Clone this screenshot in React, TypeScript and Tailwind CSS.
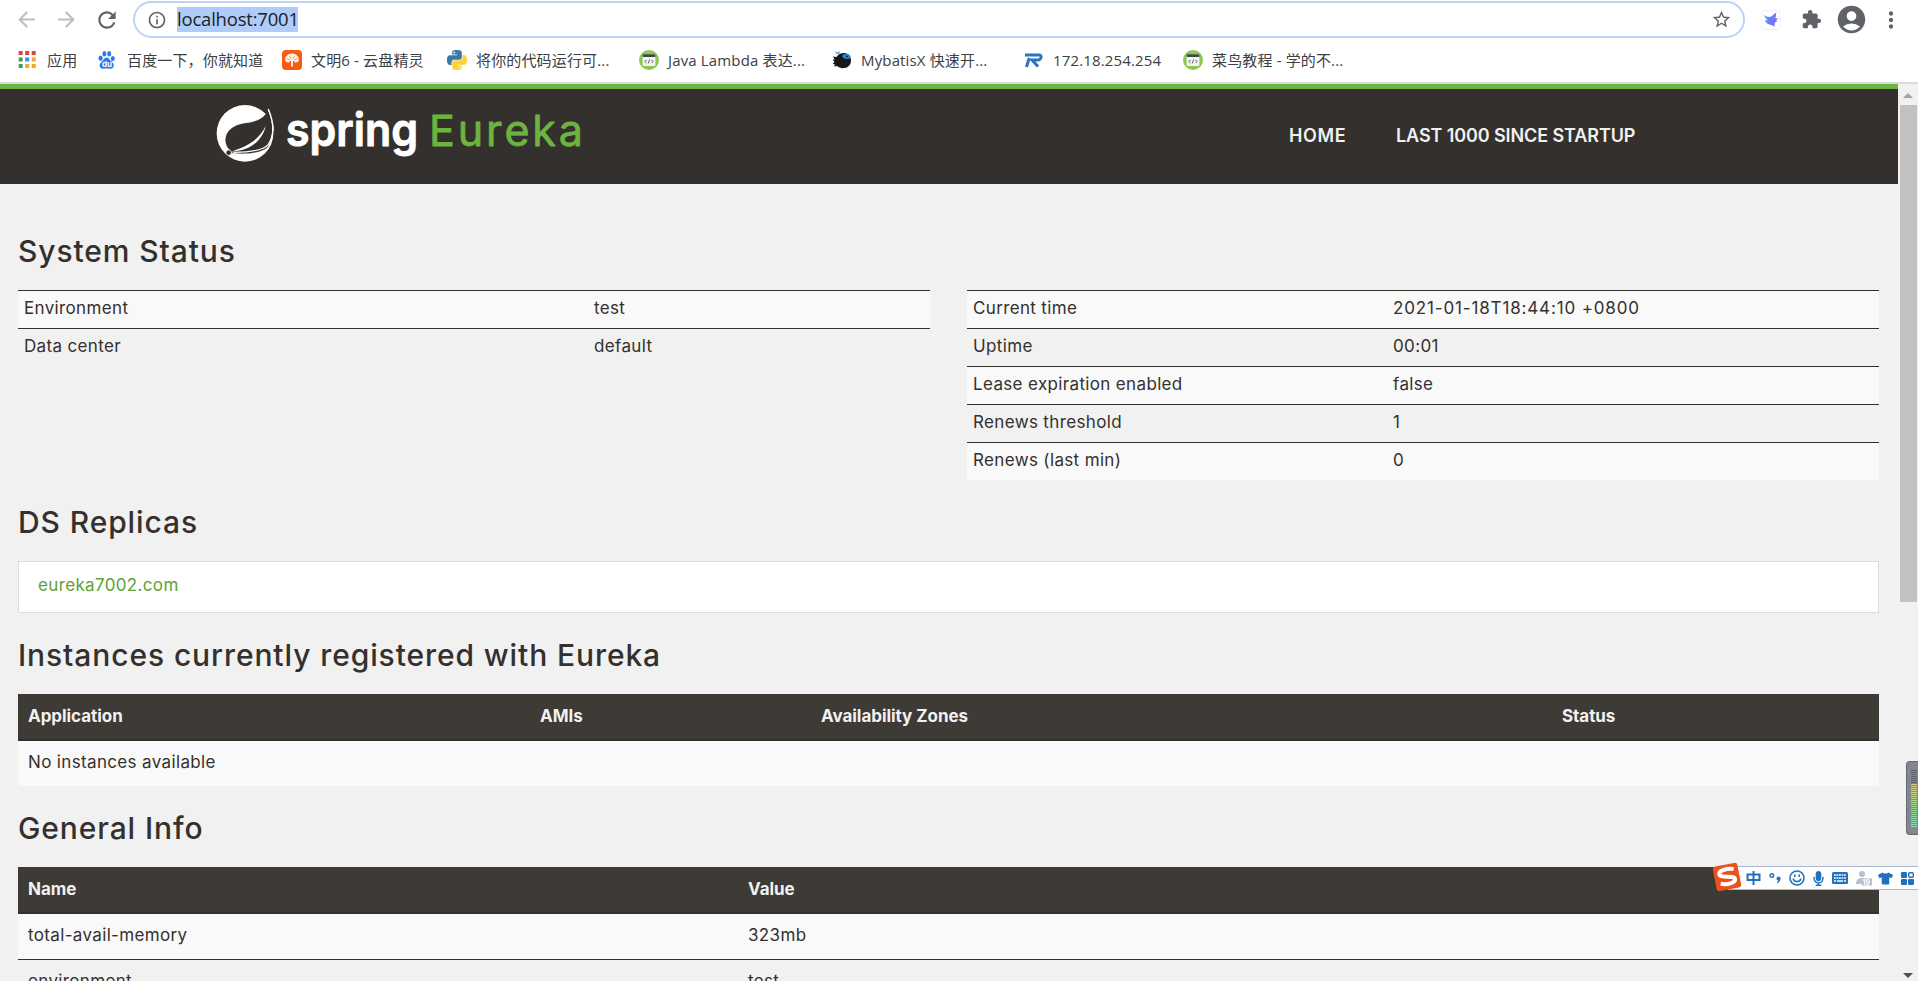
import React from 'react'
import {
  MdAccountCircle,
  MdArrowBack,
  MdArrowForward,
  MdExtension,
  MdMoreVert,
  MdOutlineInfo,
  MdRefresh,
  MdStarOutline,
} from 'react-icons/md'
import {FaMicrophone, FaTshirt} from 'react-icons/fa'

const PYTHON_PATH =
  'M14.25.18l.9.2.73.26.59.3.45.32.34.34.25.34.16.33.1.3.04.26.02.2-.01.13V8.5l-.05.63-.13.55-.21.46-.26.38-.3.31-.33.25-.35.19-.35.14-.33.1-.3.07-.26.04-.21.02H8.77l-.69.05-.59.14-.5.22-.41.27-.33.32-.27.35-.2.36-.15.37-.1.35-.07.32-.04.27-.02.21v3.06H3.17l-.21-.03-.28-.07-.32-.12-.35-.18-.36-.26-.36-.36-.35-.46-.32-.59-.28-.73-.21-.88-.14-1.05-.05-1.23.06-1.22.16-1.04.24-.87.32-.71.36-.57.4-.44.42-.33.42-.24.4-.16.36-.1.32-.05.24-.01h.16l.06.01h8.16v-.83H6.18l-.01-2.75-.02-.37.05-.34.11-.31.17-.28.25-.26.31-.23.38-.2.44-.18.51-.15.58-.12.64-.1.71-.06.77-.04.84-.02 1.27.05zm-6.3 1.98l-.23.33-.08.41.08.41.23.34.33.22.41.09.41-.09.33-.22.23-.34.08-.41-.08-.41-.23-.33-.33-.22-.41-.09-.41.09z'

const AppsIcon = () => (
  <svg viewBox="0 0 20 20" className="size-5">
    {['#db4437', '#db4437', '#db4437', '#3a9d5d', '#4285f4', '#f0a92b', '#3a9d5d', '#f0a92b', '#f0a92b'].map(
      (color, i) => (
        <rect key={i} x={0.7 + (i % 3) * 6.5} y={1 + Math.floor(i / 3) * 6.5} width="4" height="4" fill={color} />
      ),
    )}
  </svg>
)

const BaiduIcon = () => (
  <svg viewBox="0 0 20 20" className="size-5" fill="#2f78e8">
    <ellipse cx="2.600" cy="8.200" rx="2.100" ry="2.600" />
    <ellipse cx="6.400" cy="3.800" rx="2" ry="2.700" />
    <ellipse cx="11.200" cy="3.800" rx="2" ry="2.700" />
    <ellipse cx="14.800" cy="8.400" rx="2" ry="2.500" />
    <path d="M8.700 7.600c1.800 0 2.700 1.600 3.800 3 1.300 1.500 3.500 2.700 3.300 5.200-.2 2.300-1.800 3.200-3.700 3-1.300-.1-2.100-.3-3.400-.3s-2.100.2-3.400.3c-1.900.2-3.500-.7-3.700-3-.2-2.500 2-3.700 3.300-5.200 1.100-1.400 2-3 3.800-3z" />
    <text x="3.900" y="17.200" fill="#fff" className="font-['Inter'] text-[8px] font-bold">
      du
    </text>
  </svg>
)

const CloudDiskIcon = () => (
  <svg viewBox="0 0 20 20" className="size-5">
    <rect width="20" height="20" rx="4" fill="#f95c0f" />
    <path
      d="M9 16.500V11H7.500v1.500C4.500 12.800 3 11.500 3.200 9.500 3.400 6 6.500 3.600 10 3.600S16.600 6 16.800 9.500c.2 2-1.300 3.300-4.300 3V11H11v5.500z"
      fill="#fff"
      opacity=".92"
    />
    <path d="M5 9l3 1M15 9l-3 1M7.500 6l1.500 3M12.500 6L11 9" stroke="#f95c0f" strokeWidth=".6" />
  </svg>
)

const PythonIcon = () => (
  <svg viewBox="0 0 24 24" className="size-5">
    <path d={PYTHON_PATH} fill="#3b77a8" />
    <path d={PYTHON_PATH} fill="#fbd43b" transform="rotate(180 12 12)" />
  </svg>
)

const RunoobIcon = () => (
  <svg viewBox="0 0 20 20" className="size-5">
    <circle cx="10" cy="10" r="10" fill="#8cc751" />
    <rect x="3.600" y="4.500" width="12.800" height="11.500" rx="1" fill="#f4f6f1" />
    <path d="M3.600 7V5.200q0-1 1-1h10.800q1 0 1 1V7z" fill="#3c4a42" />
    <path
      d="M7.500 9.800L5.800 11.500l1.700 1.700M12.500 9.800l1.700 1.700-1.700 1.700M10.700 9.500l-1.400 4"
      stroke="#55605a"
      fill="none"
    />
  </svg>
)

const MybatisIcon = () => (
  <svg viewBox="0 0 20 20" className="size-5">
    <path
      d="M1 6.500l3.500.6C6 4.500 9 3 12 3c4 0 7 3 7 7.500 0 4-2.500 7-6.500 7.500-3 .5-6-.5-7.500-2l-3 .5 1.200-2L.8 14l1.700-2.500L.5 10l2-.8z"
      fill="#17171a"
    />
    <path d="M10 6c2-3 6-3 8.500 0 .3 2-1 3-3 3-2.500.2-4.500-.7-5.500-3z" fill="#2b82d9" />
    <path d="M3 1l2.500 1.800L7 .8l1 2.700-3.500 1z" fill="#5ba7ea" />
    <circle cx="15" cy="6.500" r="1" fill="#0f2338" />
  </svg>
)

const RuijieIcon = () => (
  <svg viewBox="0 0 20 20" className="size-5" fill="none" stroke="#2a74bd" strokeWidth="3">
    <path d="M1 5h14q2.500 0 2 2.500-.6 2.500-3.300 2.500H8l6 6.500" />
    <path d="M5.200 8L2.500 17" />
  </svg>
)

const bookmarks = [
  {label: '应用', icon: <AppsIcon />, width: 'w-[80px]'},
  {label: '百度一下，你就知道', icon: <BaiduIcon />, width: 'w-[184px]'},
  {label: '文明6 - 云盘精灵', icon: <CloudDiskIcon />, width: 'w-[165px]'},
  {label: '将你的代码运行可...', icon: <PythonIcon />, width: 'w-[192px]'},
  {label: 'Java Lambda 表达...', icon: <RunoobIcon />, width: 'w-[193px]'},
  {label: 'MybatisX 快速开...', icon: <MybatisIcon />, width: 'w-[192px]'},
  {label: '172.18.254.254', icon: <RuijieIcon />, width: 'w-[159px]'},
  {label: '菜鸟教程 - 学的不...', icon: <RunoobIcon />, width: 'w-[180px]'},
]

const BrowserChrome = () => (
  <div className="h-[84px] border-b-2 border-[#dadcdc] bg-white font-['Open_Sans','Noto_Sans_CJK_SC',sans-serif]">
    <div className="flex h-[39px] items-center pl-[14px]">
      <MdArrowBack size={25} className="mr-[15px] text-[#bcbec1]" />
      <MdArrowForward size={25} className="mr-[15px] text-[#bcbec1]" />
      <MdRefresh size={26} className="mr-[13px] text-[#5f6368]" />
      <div className="flex h-[37px] w-[1612px] items-center rounded-full border-2 border-[#b9d4f5] pr-[11px] pl-3">
        <MdOutlineInfo size={20} className="text-[#5f6368]" />
        <span className="ml-[10px] h-[25px] w-[121px] bg-[#aecbfa] text-[18.500px] leading-[24px] tracking-[-0.2px] whitespace-nowrap text-[#202124]">
          localhost:7001
        </span>
        <MdStarOutline size={21} className="ml-auto text-[#5f6368]" />
      </div>
      <svg viewBox="0 0 20 20" className="ml-4 size-5 rounded-sm border border-[#eeeffb]">
        <defs>
          <linearGradient id="bird" x1="0" y1="0" x2="1" y2="1">
            <stop offset="0" stopColor="#4aa3fb" />
            <stop offset="1" stopColor="#8a5cf0" />
          </linearGradient>
        </defs>
        <path
          d="M2 4.500c2.500 1.800 5 2.500 7.500 2C11.500 5.500 13.500 3.500 16 1.500c-.5 2.500-.5 4.500-1 6.500l3.500.5-3 1.800 1.500 1.700-2.500.5c-.5 1.500-.7 2.700-.5 5-2-1.500-3.500-1.800-5.500-2.500C5 14 3.500 12 3.500 10l3 .5C4.500 9 3 7 2 4.500z"
          fill="url(#bird)"
        />
      </svg>
      <MdExtension size={21} className="ml-5 text-[#5f6368]" />
      <MdAccountCircle size={33} className="ml-[13px] text-[#5f6368]" />
      <MdMoreVert size={26} className="ml-[10px] text-[#5f6368]" />
    </div>
    <div className="flex h-[42px] items-center pl-[18px]">
      {bookmarks.map(item => (
        <div key={item.label} className={`flex shrink-0 items-center gap-[9px] ${item.width}`}>
          {item.icon}
          <span className="text-[15px] leading-5 tracking-[0.15px] whitespace-nowrap text-[#3c4043]">{item.label}</span>
        </div>
      ))}
    </div>
  </div>
)

const SpringLogo = () => (
  <svg viewBox="0 0 370 70" className="h-[70px] w-[370px] overflow-visible">
    <g transform="translate(-17 -12) scale(0.3333)">
      <circle cx="135" cy="127" r="85" fill="#fff" />
      <path
        d="M205 54C195 84 170 92 135 97 95 103 75 125 77 150c1 15 8 22 14 28 2 4 5 7 9 8 50 4 85-2 103-18 17-30 20-70 2-114z"
        fill="#34302d"
        stroke="#34302d"
      />
      <path d="M205 54C222 95 225 130 205 160 190 180 150 184 100 184" fill="none" stroke="#fff" strokeWidth="4" />
      <path d="M197 105C188 148 150 180 92 182c53-17 86-37 105-77z" fill="#fff" />
      <path d="M205 50l14 55 14-30z" fill="#34302d" />
      <path d="M205 54c11 27 15 48 14 66" fill="none" stroke="#fff" strokeWidth="4" />
      <circle cx="86" cy="185" r="8" fill="#34302d" stroke="#fff" strokeWidth="2" />
    </g>
    <text
      x="69"
      y="43"
      textLength="132"
      lengthAdjust="spacingAndGlyphs"
      fill="#fff"
      stroke="#fff"
      strokeWidth="1"
      strokeLinejoin="round"
      className="font-['Inter'] text-[46px] font-semibold"
    >
      spring
    </text>
    <text
      x="212"
      y="43"
      textLength="154"
      fill="#6db33f"
      stroke="#6db33f"
      strokeWidth=".8"
      strokeLinejoin="round"
      className="font-['Inter'] text-[43px]"
    >
      Eureka
    </text>
  </svg>
)

const NavBar = () => (
  <nav className="flex h-[100px] border-t-[5px] border-[#6db33f] bg-[#34302d] pl-[217px] text-[#f1f1f1]">
    <div className="pt-[14px]">
      <SpringLogo />
    </div>
    <ul className="ml-[702px] flex gap-[49px] pt-[35px] font-['Inter'] text-[18px] leading-6 font-semibold tracking-[-0.1px] whitespace-nowrap">
      <li className="w-[58px] tracking-[0.6px]">HOME</li>
      <li>LAST 1000 SINCE STARTUP</li>
    </ul>
  </nav>
)

type StatusTableProps = {
  rows: Array<[string, string]>
  labelWidth: string
}

const StatusTable: React.FC<StatusTableProps> = ({rows, labelWidth}) => (
  <div className="w-[912px]">
    {rows.map(([label, value]) => (
      <div key={label} className="flex h-[38px] border-t border-[#34302d] pt-[5px] odd:bg-[#f9f9f9]">
        <div className={`pl-[6px] ${labelWidth}`}>{label}</div>
        <div className={value.length > 10 ? 'pl-[6px] tracking-[0.85px]' : 'pl-[6px]'}>{value}</div>
      </div>
    ))}
  </div>
)

const Heading: React.FC<{children: React.ReactNode}> = ({children}) => (
  <h1 className="mt-[26px] mb-[22px] text-[30px] leading-[33px] font-[450] tracking-[0.9px]">{children}</h1>
)

type Column = {
  title: string
  width: string
}

const TableHead: React.FC<{columns: Column[]}> = ({columns}) => (
  <div className="flex h-[47px] border-b-2 border-[#34302d] bg-[#3e3a35] pt-[10px] font-bold tracking-[-0.05px] text-[#f1f1f1]">
    {columns.map(column => (
      <div key={column.title} className={`pl-[10px] ${column.width}`}>
        {column.title}
      </div>
    ))}
  </div>
)

const instanceColumns: Column[] = [
  {title: 'Application', width: 'w-[512px]'},
  {title: 'AMIs', width: 'w-[281px]'},
  {title: 'Availability Zones', width: 'w-[741px]'},
  {title: 'Status', width: 'w-[327px]'},
]

const infoColumns: Column[] = [
  {title: 'Name', width: 'w-[720px]'},
  {title: 'Value', width: 'w-[1141px]'},
]

const Scrollbar = () => (
  <div className="flex w-5 flex-col items-center bg-[#f1f1f1]">
    <svg viewBox="0 0 10 5" className="mt-[9px] h-[5px] w-[10px]">
      <path d="M5 0l5 5H0z" fill="#a3a3a3" />
    </svg>
    <div className="mt-[7px] ml-px h-[497px] w-[17px] bg-[#c1c1c1]" />
    <svg viewBox="0 0 10 5" className="mt-auto mb-[3px] h-[5px] w-[10px]">
      <path d="M0 0h10L5 5z" fill="#505050" />
    </svg>
  </div>
)

// floating widget that sticks to the right edge of the screen
const LevelMeter = () => (
  <div className="absolute top-[761px] right-0 h-[74px] w-3 rounded-l-[4px] border border-r-0 border-[#676a73] bg-[#83868f] pt-[8px] pl-[4px]">
    <div className="flex flex-col gap-px">
      {Array.from({length: 29}, (_, i) => (
        <div
          key={i}
          className="h-px w-[6px]"
          style={{backgroundColor: i < 7 ? '#5d6069' : `hsl(${45 + (i - 7) * 5.5} 50% 70%)`}}
        />
      ))}
    </div>
  </div>
)

const ImeToolbar = () => (
  <div className="absolute top-[866px] right-0 flex h-[24px] w-[190px] items-center border-y border-[#a9b6d3] bg-white text-[#2371be]">
    <svg viewBox="0 0 30 30" className="absolute -top-[5px] -left-[16px] size-[30px]">
      <g transform="rotate(-11 15 15)">
        <rect x="2.500" y="2.500" width="25" height="25" rx="3" fill="#e9521f" />
        <path
          d="M23 8.500C18 6.500 8 6.500 8 11c0 4.500 14.500 3 14.500 7.500 0 4-9 4.500-15 2"
          fill="none"
          stroke="#fff"
          strokeWidth="4"
        />
      </g>
    </svg>
    <div className="flex w-full items-center justify-between pr-1 pl-[18px]">
      <svg viewBox="0 0 15 14" className="h-[14px] w-[15px]" fill="none" stroke="currentColor" strokeWidth="2">
        <path d="M1.500 3.500h12v5.500h-12zM7.500 0v14" />
      </svg>
      <svg viewBox="0 0 12 12" className="ml-[2px] size-3">
        <circle cx="2.800" cy="3.500" r="1.800" fill="none" stroke="currentColor" strokeWidth="1.400" />
        <path
          d="M7.500 6.500a2 2 0 1 1 3.800 1c-.3 1.800-1.300 3-3 3.800l-.5-.8c1-.6 1.400-1.200 1.500-2-1 0-1.800-.8-1.800-2z"
          fill="currentColor"
        />
      </svg>
      <svg viewBox="0 0 16 16" className="ml-[2px] size-4" fill="none" stroke="currentColor" strokeWidth="1.600">
        <circle cx="8" cy="8" r="7" />
        <path d="M4.200 8.500c.6 4.200 7 4.200 7.600 0M5.800 4.500v2.500M10.200 4.500v2.500" />
      </svg>
      <FaMicrophone size={15} />
      <svg viewBox="0 0 16 12" className="h-3 w-4">
        <rect width="16" height="12" rx="1.500" fill="currentColor" />
        <path d="M2 3h12M2 6h12" stroke="#fff" strokeWidth="1.300" strokeDasharray="1.800 .7" />
        <path d="M2 9h2M5 9h6M12 9h2" stroke="#fff" strokeWidth="1.300" />
      </svg>
      <svg viewBox="0 0 16 16" className="ml-[2px] size-4">
        <circle cx="6" cy="4" r="3" fill="#b9bfce" />
        <path d="M0 14c0-4 2-6 6-6s6 2 6 6z" fill="#b9bfce" />
        <rect x="6" y="8.500" width="10" height="7" fill="#b9bfce" />
        <text x="6.600" y="14.700" fill="#fff" className="font-['Inter'] text-[7px] font-bold">
          19
        </text>
      </svg>
      <FaTshirt size={15} />
      <svg viewBox="0 0 13 13" className="ml-[2px] size-[13px]" fill="currentColor">
        <rect width="6" height="6" rx="1" />
        <rect x="7.700" y=".7" width="4.600" height="4.600" rx="1" fill="none" stroke="currentColor" strokeWidth="1.400" />
        <rect y="7" width="6" height="6" rx="1" />
        <rect x="7" y="7" width="6" height="6" rx="1" />
      </svg>
    </div>
  </div>
)

export default function App() {
  return (
    <div className="relative flex h-[981px] w-[1918px] flex-col overflow-hidden bg-[#f1f1f1]">
      <BrowserChrome />
      <div className="flex min-h-0 flex-1">
        <div className="w-[1898px] overflow-hidden">
          <NavBar />
          <main className="px-[18px] pt-[25px] font-['Inter',sans-serif] text-[17px] leading-6 tracking-[0.35px] text-[#34302d]">
            <Heading>System Status</Heading>
            <div className="flex w-[1861px] justify-between">
              <StatusTable
                labelWidth="w-[570px]"
                rows={[
                  ['Environment', 'test'],
                  ['Data center', 'default'],
                ]}
              />
              <StatusTable
                labelWidth="w-[420px]"
                rows={[
                  ['Current time', '2021-01-18T18:44:10 +0800'],
                  ['Uptime', '00:01'],
                  ['Lease expiration enabled', 'false'],
                  ['Renews threshold', '1'],
                  ['Renews (last min)', '0'],
                ]}
              />
            </div>

            <Heading>DS Replicas</Heading>
            <div className="h-[52px] w-[1861px] border border-[#dddddd] bg-white pt-[11px] pl-[19px] text-[#5fa134]">
              eureka7002.com
            </div>

            <Heading>Instances currently registered with Eureka</Heading>
            <div className="w-[1861px]">
              <TableHead columns={instanceColumns} />
              <div className="h-[45px] bg-[#f9f9f9] pt-[9px] pl-[10px]">No instances available</div>
            </div>

            <Heading>General Info</Heading>
            <div className="w-[1861px]">
              <TableHead columns={infoColumns} />
              <div className="flex h-[45px] bg-[#f9f9f9] pt-[9px]">
                <div className="w-[720px] pl-[10px]">total-avail-memory</div>
                <div className="pl-[10px]">323mb</div>
              </div>
              <div className="flex h-[46px] border-t border-[#34302d] pt-[9px]">
                <div className="w-[720px] pl-[10px]">environment</div>
                <div className="pl-[10px]">test</div>
              </div>
            </div>
          </main>
        </div>
        <Scrollbar />
      </div>
      <LevelMeter />
      <ImeToolbar />
    </div>
  )
}
